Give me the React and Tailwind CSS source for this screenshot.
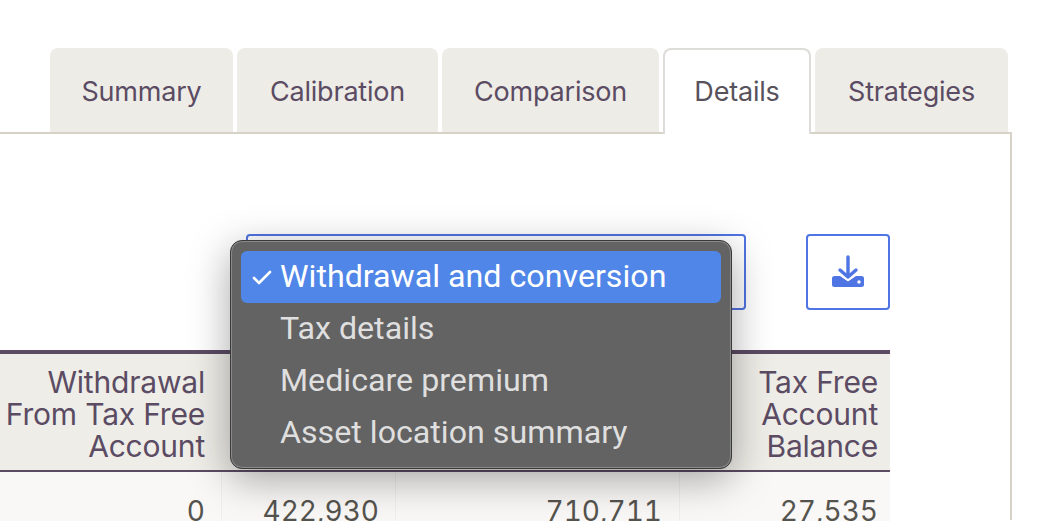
import React from 'react';
import { Check } from 'lucide-react';

const tabs = [
  { label: 'Summary', width: 'w-[183px]' },
  { label: 'Calibration', width: 'w-[201px]' },
  { label: 'Comparison', width: 'w-[217px]' },
  { label: 'Details', width: 'w-[148px]', active: true },
  { label: 'Strategies', width: 'w-[193px]' },
];

const menuItems = ['Withdrawal and conversion', 'Tax details', 'Medicare premium', 'Asset location summary'];

const headers = [
  { lines: ['Withdrawal', 'From Tax Free', 'Account'], cls: 'w-[222px] pr-[17px]' },
  { lines: [], cls: 'w-[174px] pr-[17px]' },
  { lines: [], cls: 'w-[284px] pr-[18px]' },
  { lines: ['Tax Free', 'Account', 'Balance'], cls: 'w-[210px] pr-[12px]' },
];

const row = [
  { value: '0', cls: 'w-[222px] pr-[16px] border-r' },
  { value: '422,930', cls: 'w-[174px] pr-[16px] border-r' },
  { value: '710,711', cls: 'w-[284px] pr-[17px] border-r' },
  { value: '27,535', cls: 'w-[210px] pr-[12px]' },
];

const DownloadIcon = () => (
  <svg width="34" height="34" viewBox="0 0 34 34" fill="none">
    <path d="M1 23.5a2.500 2.500 0 0 1 2.500-2.500h5.500l8 5.500 8-5.500h5.500a2.500 2.500 0 0 1 2.500 2.500v6a2.500 2.500 0 0 1-2.500 2.500h-27a2.500 2.500 0 0 1-2.500-2.500z" fill="#4f74e3" />
    <path d="M17 2v20M9 15l8 7 8-7" stroke="#4f74e3" strokeWidth="3.4" strokeLinecap="round" strokeLinejoin="round" />
    <circle cx="28" cy="27" r="1.700" fill="#fff" />
  </svg>
);

const App = () => {
  return (
    <div className="relative w-[1059px] h-[521px] overflow-hidden bg-white font-['Inter',sans-serif]">
      <div className="flex gap-[4px] pl-[50px] pt-[48px] h-[133px]">
        {tabs.map((tab) =>
          tab.active ? (
            <div
              key={tab.label}
              className={`${tab.width} h-[86px] flex items-center justify-center rounded-t-[8px] border-2 border-b-0 border-[#dedcd8] bg-white text-[27px] tracking-[-0.2px] text-[#58525c] relative z-10`}
            >
              {tab.label}
            </div>
          ) : (
            <div
              key={tab.label}
              className={`${tab.width} h-[84px] pt-[4px] flex items-center justify-center rounded-t-[8px] bg-[#eeece7] text-[27px] tracking-[-0.2px] text-[#5b4b63]`}
            >
              {tab.label}
            </div>
          ),
        )}
      </div>

      <div className="w-[1012px] h-[388px] border-t-2 border-r-2 border-[#d6d2c6] -mt-[1px]">
        <div className="flex justify-end gap-[60px] w-[890px] pt-[100px]">
          <div className="w-[500px] h-[76px] rounded-[4px] border-2 border-[#4f74e3] bg-white"></div>
          <button className="w-[84px] h-[76px] flex items-center justify-center rounded-[4px] border-2 border-[#4f74e3] bg-white">
            <DownloadIcon />
          </button>
        </div>

        <div className="w-[890px] mt-[40px]">
          <div className="flex h-[122px] border-t-4 border-b-2 border-[#5b4b63] bg-[#eeede8]">
            {headers.map((header, i) => (
              <div key={i} className={`${header.cls} pt-[12px] text-right text-[30px] leading-[32px] tracking-[-0.2px] text-[#5b4b63]`}>
                {header.lines.map((line) => (
                  <div key={line}>{line}</div>
                ))}
              </div>
            ))}
          </div>
          <div className="flex h-[60px] bg-[#f9f8f6]">
            {row.map((cell) => (
              <div key={cell.value} className={`${cell.cls} pt-[21px] border-[#efeeea] text-right text-[28px] leading-[36px] tabular-nums text-[#55534e]`}>
                {cell.value}
              </div>
            ))}
          </div>
        </div>
      </div>

      {/* native select popup, sits over the select and the table */}
      <div className="absolute left-[230px] top-[240px] w-[502px] h-[229px] p-[10px] rounded-[12px] border border-[#3a3a3a] bg-[#636363] shadow-[inset_0_0_0_1px_#8a8a8a,0_10px_40px_rgba(0,0,0,0.35)] font-['Roboto',sans-serif] text-[32.2px] text-[#dfdfdf]">
        {menuItems.map((item, i) => (
          <div
            key={item}
            className={`relative h-[52px] pl-[39px] pb-[2px] flex items-center rounded-[6px] ${i === 0 ? 'bg-[#4f86e8] text-white' : ''}`}
          >
            {i === 0 && <Check className="absolute left-[9px] top-[15px]" size={24} strokeWidth={2.6} />}
            {item}
          </div>
        ))}
      </div>
    </div>
  );
};

export default App;
